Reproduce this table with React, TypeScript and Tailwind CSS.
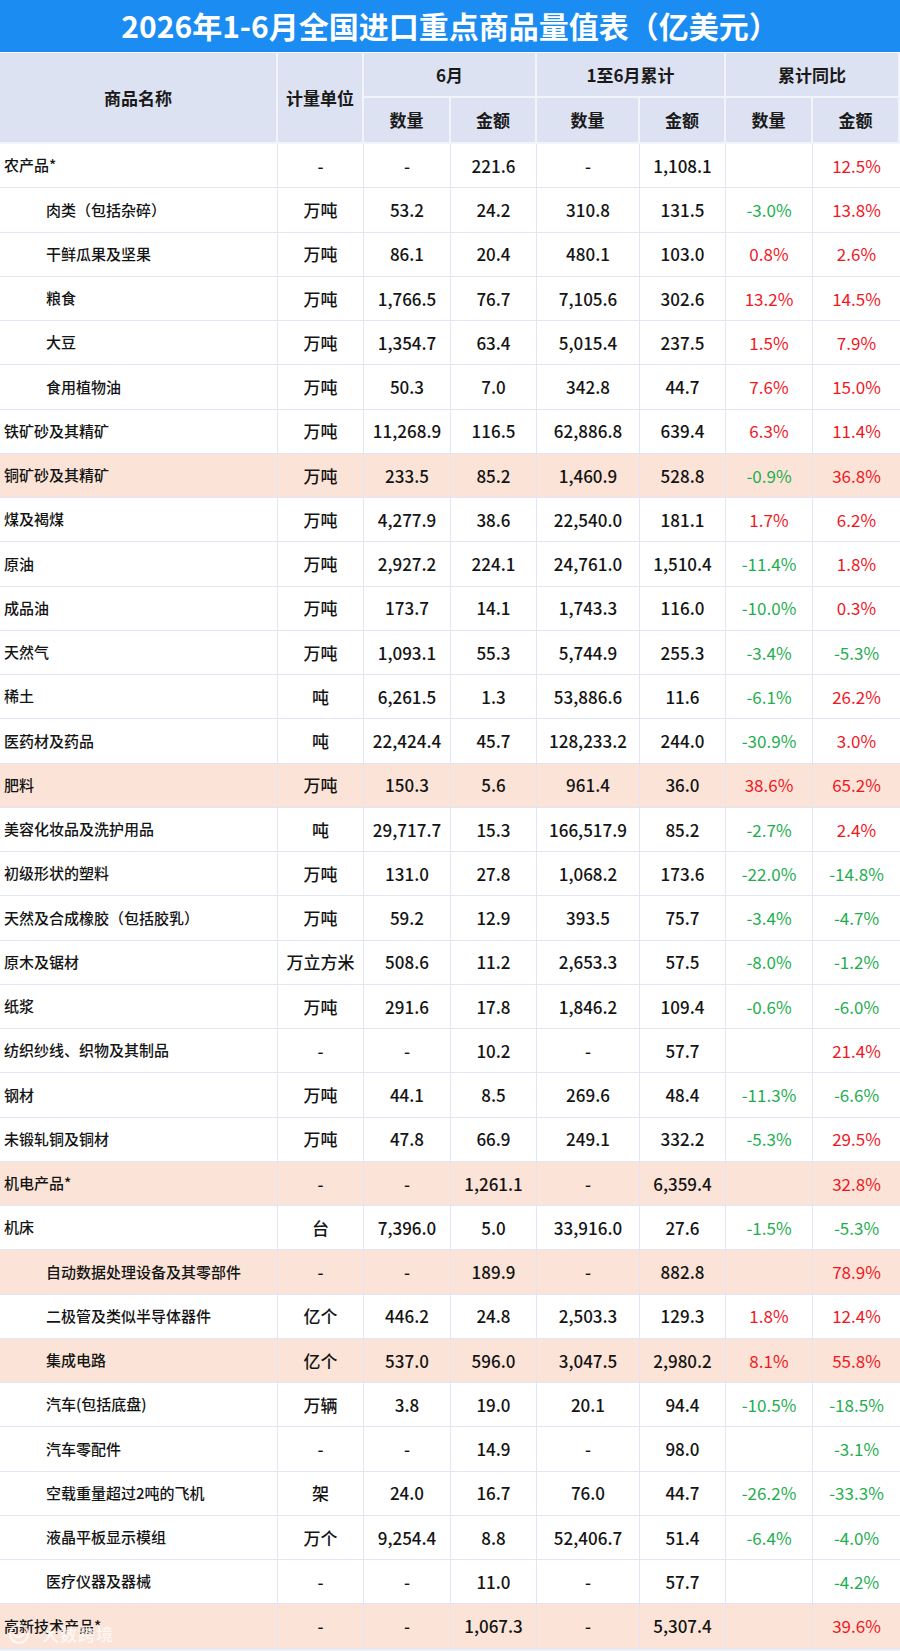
import React from 'react';

type Row = {
  name: string;
  unit: string;
  mQty: string;
  mAmt: string;
  cQty: string;
  cAmt: string;
  yQty: string;
  yAmt: string;
  indent?: boolean;
  hl?: boolean;
};

const rows: Row[] = [
  { name: '农产品*', unit: '-', mQty: '-', mAmt: '221.6', cQty: '-', cAmt: '1,108.1', yQty: '', yAmt: '12.5%' },
  { name: '肉类（包括杂碎）', unit: '万吨', mQty: '53.2', mAmt: '24.2', cQty: '310.8', cAmt: '131.5', yQty: '-3.0%', yAmt: '13.8%', indent: true },
  { name: '干鲜瓜果及坚果', unit: '万吨', mQty: '86.1', mAmt: '20.4', cQty: '480.1', cAmt: '103.0', yQty: '0.8%', yAmt: '2.6%', indent: true },
  { name: '粮食', unit: '万吨', mQty: '1,766.5', mAmt: '76.7', cQty: '7,105.6', cAmt: '302.6', yQty: '13.2%', yAmt: '14.5%', indent: true },
  { name: '大豆', unit: '万吨', mQty: '1,354.7', mAmt: '63.4', cQty: '5,015.4', cAmt: '237.5', yQty: '1.5%', yAmt: '7.9%', indent: true },
  { name: '食用植物油', unit: '万吨', mQty: '50.3', mAmt: '7.0', cQty: '342.8', cAmt: '44.7', yQty: '7.6%', yAmt: '15.0%', indent: true },
  { name: '铁矿砂及其精矿', unit: '万吨', mQty: '11,268.9', mAmt: '116.5', cQty: '62,886.8', cAmt: '639.4', yQty: '6.3%', yAmt: '11.4%' },
  { name: '铜矿砂及其精矿', unit: '万吨', mQty: '233.5', mAmt: '85.2', cQty: '1,460.9', cAmt: '528.8', yQty: '-0.9%', yAmt: '36.8%', hl: true },
  { name: '煤及褐煤', unit: '万吨', mQty: '4,277.9', mAmt: '38.6', cQty: '22,540.0', cAmt: '181.1', yQty: '1.7%', yAmt: '6.2%' },
  { name: '原油', unit: '万吨', mQty: '2,927.2', mAmt: '224.1', cQty: '24,761.0', cAmt: '1,510.4', yQty: '-11.4%', yAmt: '1.8%' },
  { name: '成品油', unit: '万吨', mQty: '173.7', mAmt: '14.1', cQty: '1,743.3', cAmt: '116.0', yQty: '-10.0%', yAmt: '0.3%' },
  { name: '天然气', unit: '万吨', mQty: '1,093.1', mAmt: '55.3', cQty: '5,744.9', cAmt: '255.3', yQty: '-3.4%', yAmt: '-5.3%' },
  { name: '稀土', unit: '吨', mQty: '6,261.5', mAmt: '1.3', cQty: '53,886.6', cAmt: '11.6', yQty: '-6.1%', yAmt: '26.2%' },
  { name: '医药材及药品', unit: '吨', mQty: '22,424.4', mAmt: '45.7', cQty: '128,233.2', cAmt: '244.0', yQty: '-30.9%', yAmt: '3.0%' },
  { name: '肥料', unit: '万吨', mQty: '150.3', mAmt: '5.6', cQty: '961.4', cAmt: '36.0', yQty: '38.6%', yAmt: '65.2%', hl: true },
  { name: '美容化妆品及洗护用品', unit: '吨', mQty: '29,717.7', mAmt: '15.3', cQty: '166,517.9', cAmt: '85.2', yQty: '-2.7%', yAmt: '2.4%' },
  { name: '初级形状的塑料', unit: '万吨', mQty: '131.0', mAmt: '27.8', cQty: '1,068.2', cAmt: '173.6', yQty: '-22.0%', yAmt: '-14.8%' },
  { name: '天然及合成橡胶（包括胶乳）', unit: '万吨', mQty: '59.2', mAmt: '12.9', cQty: '393.5', cAmt: '75.7', yQty: '-3.4%', yAmt: '-4.7%' },
  { name: '原木及锯材', unit: '万立方米', mQty: '508.6', mAmt: '11.2', cQty: '2,653.3', cAmt: '57.5', yQty: '-8.0%', yAmt: '-1.2%' },
  { name: '纸浆', unit: '万吨', mQty: '291.6', mAmt: '17.8', cQty: '1,846.2', cAmt: '109.4', yQty: '-0.6%', yAmt: '-6.0%' },
  { name: '纺织纱线、织物及其制品', unit: '-', mQty: '-', mAmt: '10.2', cQty: '-', cAmt: '57.7', yQty: '', yAmt: '21.4%' },
  { name: '钢材', unit: '万吨', mQty: '44.1', mAmt: '8.5', cQty: '269.6', cAmt: '48.4', yQty: '-11.3%', yAmt: '-6.6%' },
  { name: '未锻轧铜及铜材', unit: '万吨', mQty: '47.8', mAmt: '66.9', cQty: '249.1', cAmt: '332.2', yQty: '-5.3%', yAmt: '29.5%' },
  { name: '机电产品*', unit: '-', mQty: '-', mAmt: '1,261.1', cQty: '-', cAmt: '6,359.4', yQty: '', yAmt: '32.8%', hl: true },
  { name: '机床', unit: '台', mQty: '7,396.0', mAmt: '5.0', cQty: '33,916.0', cAmt: '27.6', yQty: '-1.5%', yAmt: '-5.3%' },
  { name: '自动数据处理设备及其零部件', unit: '-', mQty: '-', mAmt: '189.9', cQty: '-', cAmt: '882.8', yQty: '', yAmt: '78.9%', indent: true, hl: true },
  { name: '二极管及类似半导体器件', unit: '亿个', mQty: '446.2', mAmt: '24.8', cQty: '2,503.3', cAmt: '129.3', yQty: '1.8%', yAmt: '12.4%', indent: true },
  { name: '集成电路', unit: '亿个', mQty: '537.0', mAmt: '596.0', cQty: '3,047.5', cAmt: '2,980.2', yQty: '8.1%', yAmt: '55.8%', indent: true, hl: true },
  { name: '汽车(包括底盘)', unit: '万辆', mQty: '3.8', mAmt: '19.0', cQty: '20.1', cAmt: '94.4', yQty: '-10.5%', yAmt: '-18.5%', indent: true },
  { name: '汽车零配件', unit: '-', mQty: '-', mAmt: '14.9', cQty: '-', cAmt: '98.0', yQty: '', yAmt: '-3.1%', indent: true },
  { name: '空载重量超过2吨的飞机', unit: '架', mQty: '24.0', mAmt: '16.7', cQty: '76.0', cAmt: '44.7', yQty: '-26.2%', yAmt: '-33.3%', indent: true },
  { name: '液晶平板显示模组', unit: '万个', mQty: '9,254.4', mAmt: '8.8', cQty: '52,406.7', cAmt: '51.4', yQty: '-6.4%', yAmt: '-4.0%', indent: true },
  { name: '医疗仪器及器械', unit: '-', mQty: '-', mAmt: '11.0', cQty: '-', cAmt: '57.7', yQty: '', yAmt: '-4.2%', indent: true },
  { name: '高新技术产品*', unit: '-', mQty: '-', mAmt: '1,067.3', cQty: '-', cAmt: '5,307.4', yQty: '', yAmt: '39.6%', hl: true },
];

const cols = 'grid grid-cols-[278px_86px_87px_86px_103px_86px_87px_87px]';

const pctColor = (v: string) => (v.startsWith('-') ? 'text-[#1fae4f]' : 'text-[#f0171f]');

const Cell = ({ children, className = '' }: { children?: React.ReactNode; className?: string }) => (
  <div className={`flex items-center justify-center border-r border-b border-[#e1e5f4] ${className}`}>
    {children}
  </div>
);

const HeadCell = ({ children, className = '' }: { children?: React.ReactNode; className?: string }) => (
  <div className={`flex items-center justify-center bg-[#dde2f2] border-r-2 border-b-2 border-[#f2f4fb] text-[17px] font-bold text-[#1a1a1a] ${className}`}>
    {children}
  </div>
);

const Watermark = () => (
  <div className="absolute left-[8px] bottom-[5px] flex items-center gap-[12px] text-white/75 pointer-events-none">
    <svg width="22" height="22" viewBox="0 0 22 22" fill="none">
      <circle cx="11" cy="11" r="9" stroke="white" strokeOpacity="0.75" strokeWidth="2.2" />
      <path d="M6 12c2 3 7 3 9 -1" stroke="white" strokeOpacity="0.75" strokeWidth="2" strokeLinecap="round" />
    </svg>
    <span className="text-[17px] font-medium tracking-[1px]">大数跨境</span>
  </div>
);

const App = () => {
  return (
    <div
      className="w-[900px] bg-white text-[#141414] relative"
      style={{ fontFamily: '"Noto Sans CJK SC", "Noto Sans", sans-serif' }}
    >
      <div className="h-[52px] bg-[#1a8cf2] flex items-center justify-center text-white text-[30px] font-bold pb-[2px]">
        2026年1-6月全国进口重点商品量值表（亿美元）
      </div>

      <div className={`${cols} grid-rows-[45px_46px] mt-[1px]`}>
        <HeadCell className="row-span-2">商品名称</HeadCell>
        <HeadCell className="row-span-2">计量单位</HeadCell>
        <HeadCell className="col-span-2">6月</HeadCell>
        <HeadCell className="col-span-2">1至6月累计</HeadCell>
        <HeadCell className="col-span-2 border-r-0">累计同比</HeadCell>
        <HeadCell>数量</HeadCell>
        <HeadCell>金额</HeadCell>
        <HeadCell>数量</HeadCell>
        <HeadCell>金额</HeadCell>
        <HeadCell>数量</HeadCell>
        <HeadCell className="border-r-0">金额</HeadCell>
      </div>

      <div>
        {rows.map((r) => (
          <div key={r.name} className={`${cols} h-[44.25px] ${r.hl ? 'bg-[#fbe4d7]' : 'bg-white'}`}>
            <Cell className={`justify-start text-[15px] font-medium ${r.indent ? 'pl-[46px]' : 'pl-[4px]'}`}>{r.name}</Cell>
            <Cell className="text-[17px] font-medium">{r.unit}</Cell>
            <Cell className="text-[17px] font-medium">{r.mQty}</Cell>
            <Cell className="text-[17px] font-medium">{r.mAmt}</Cell>
            <Cell className="text-[17px] font-medium">{r.cQty}</Cell>
            <Cell className="text-[17px] font-medium">{r.cAmt}</Cell>
            <Cell className={`text-[17px] ${pctColor(r.yQty)}`}>{r.yQty}</Cell>
            <Cell className={`text-[17px] border-r-0 ${pctColor(r.yAmt)}`}>{r.yAmt}</Cell>
          </div>
        ))}
      </div>
      <div className="h-[3px] bg-[#eef0f8]" />

      <Watermark />
    </div>
  );
};

export default App;
